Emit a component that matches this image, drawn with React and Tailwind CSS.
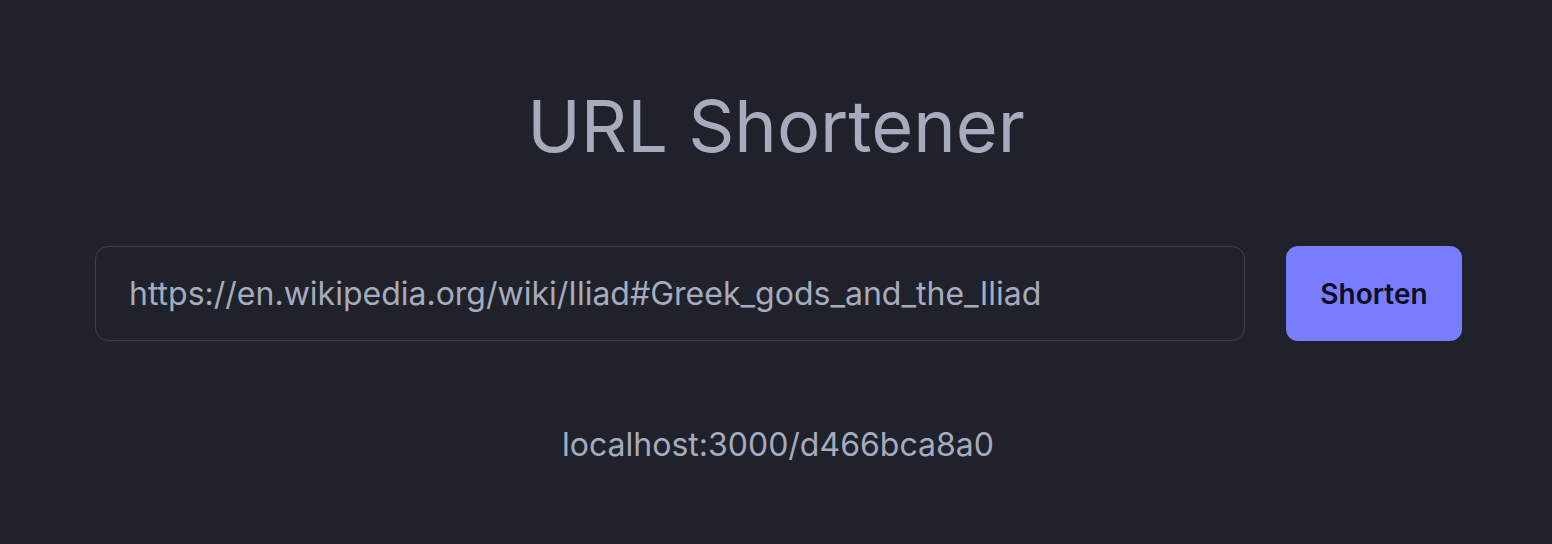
export default function App() {
  return (
    <div
      className="w-full h-[544px] bg-[#1f222a] flex flex-col items-center"
      style={{ fontFamily: "Inter, 'Noto Sans', sans-serif" }}
    >
      <h1 className="mt-[84px] text-[72px] leading-[84px] text-[#a6abbd] font-normal">URL Shortener</h1>
      <div className="mt-[78px] w-full pl-[95px] pr-[90px] flex items-stretch gap-[41px]">
        <div className="flex-1 h-[95px] rounded-[13px] border-[1.5px] border-[#3d4049] flex items-center pl-[33px] text-[32px] text-[#a6abbd]">
          https://en.wikipedia.org/wiki/Iliad#Greek_gods_and_the_Iliad
        </div>
        <button className="w-[176px] h-[95px] rounded-[12px] bg-[#7a7cff] text-[#0d0d24] text-[28px] font-semibold">
          Shorten
        </button>
      </div>
      <div className="mt-[84px] ml-[4px] text-[32px] leading-[40px] text-[#a6abbd]">localhost:3000/d466bca8a0</div>
    </div>
  );
}
